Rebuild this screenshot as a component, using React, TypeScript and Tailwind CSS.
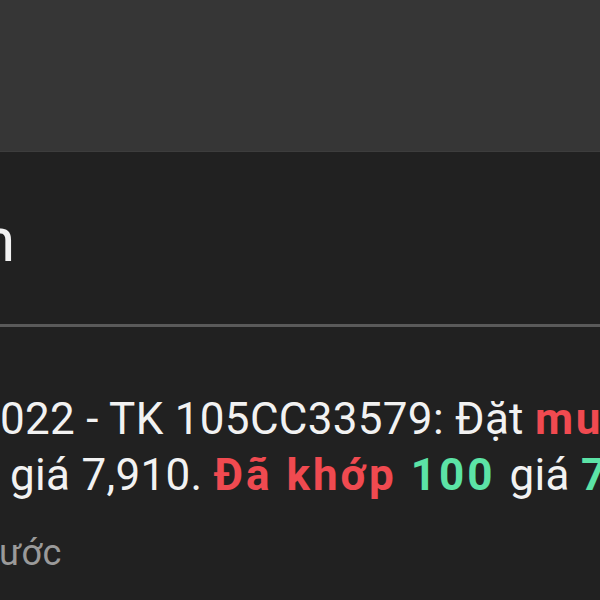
export default function App() {
  return (
    <div className="w-[600px] h-[600px] overflow-hidden bg-[#212121] font-['Roboto',sans-serif] text-[#f2f2f2]">
      {/* Thanh tiêu đề */}
      <div className="h-[152px] bg-[#363636] border-b border-[#3d3d3d]" />

      {/* Tiêu đề mục */}
      <div className="h-[172px] pt-[48px] whitespace-nowrap">
        <div className="ml-[-19px] text-[62px] leading-[80px] font-normal">n</div>
      </div>
      <div className="h-[3px] bg-[#5a5a5a]" />

      {/* Nội dung thông báo */}
      <div className="pt-[64px] whitespace-nowrap tracking-[0.3px]">
        <div className="text-[44px] leading-[56px]">
          022 - TK 105CC33579: Đặt <span className="font-bold tracking-[2.5px] text-[#f04a50]">mua</span>
        </div>
        <div className="pl-[10px] text-[44px] leading-[56px]">
          giá 7,910. <span className="font-bold tracking-[3px] text-[#f04a50]">Đã khớp </span>
          <span className="font-bold tracking-[3px] text-[#5ce3a6]">100 </span>giá{' '}
          <span className="font-bold tracking-[3px] text-[#5ce3a6]">7,910</span>
        </div>
        <div className="mt-[26px] ml-[-1px] text-[36px] leading-[48px] text-[#9a9a9a]">ước</div>
      </div>
    </div>
  );
}
